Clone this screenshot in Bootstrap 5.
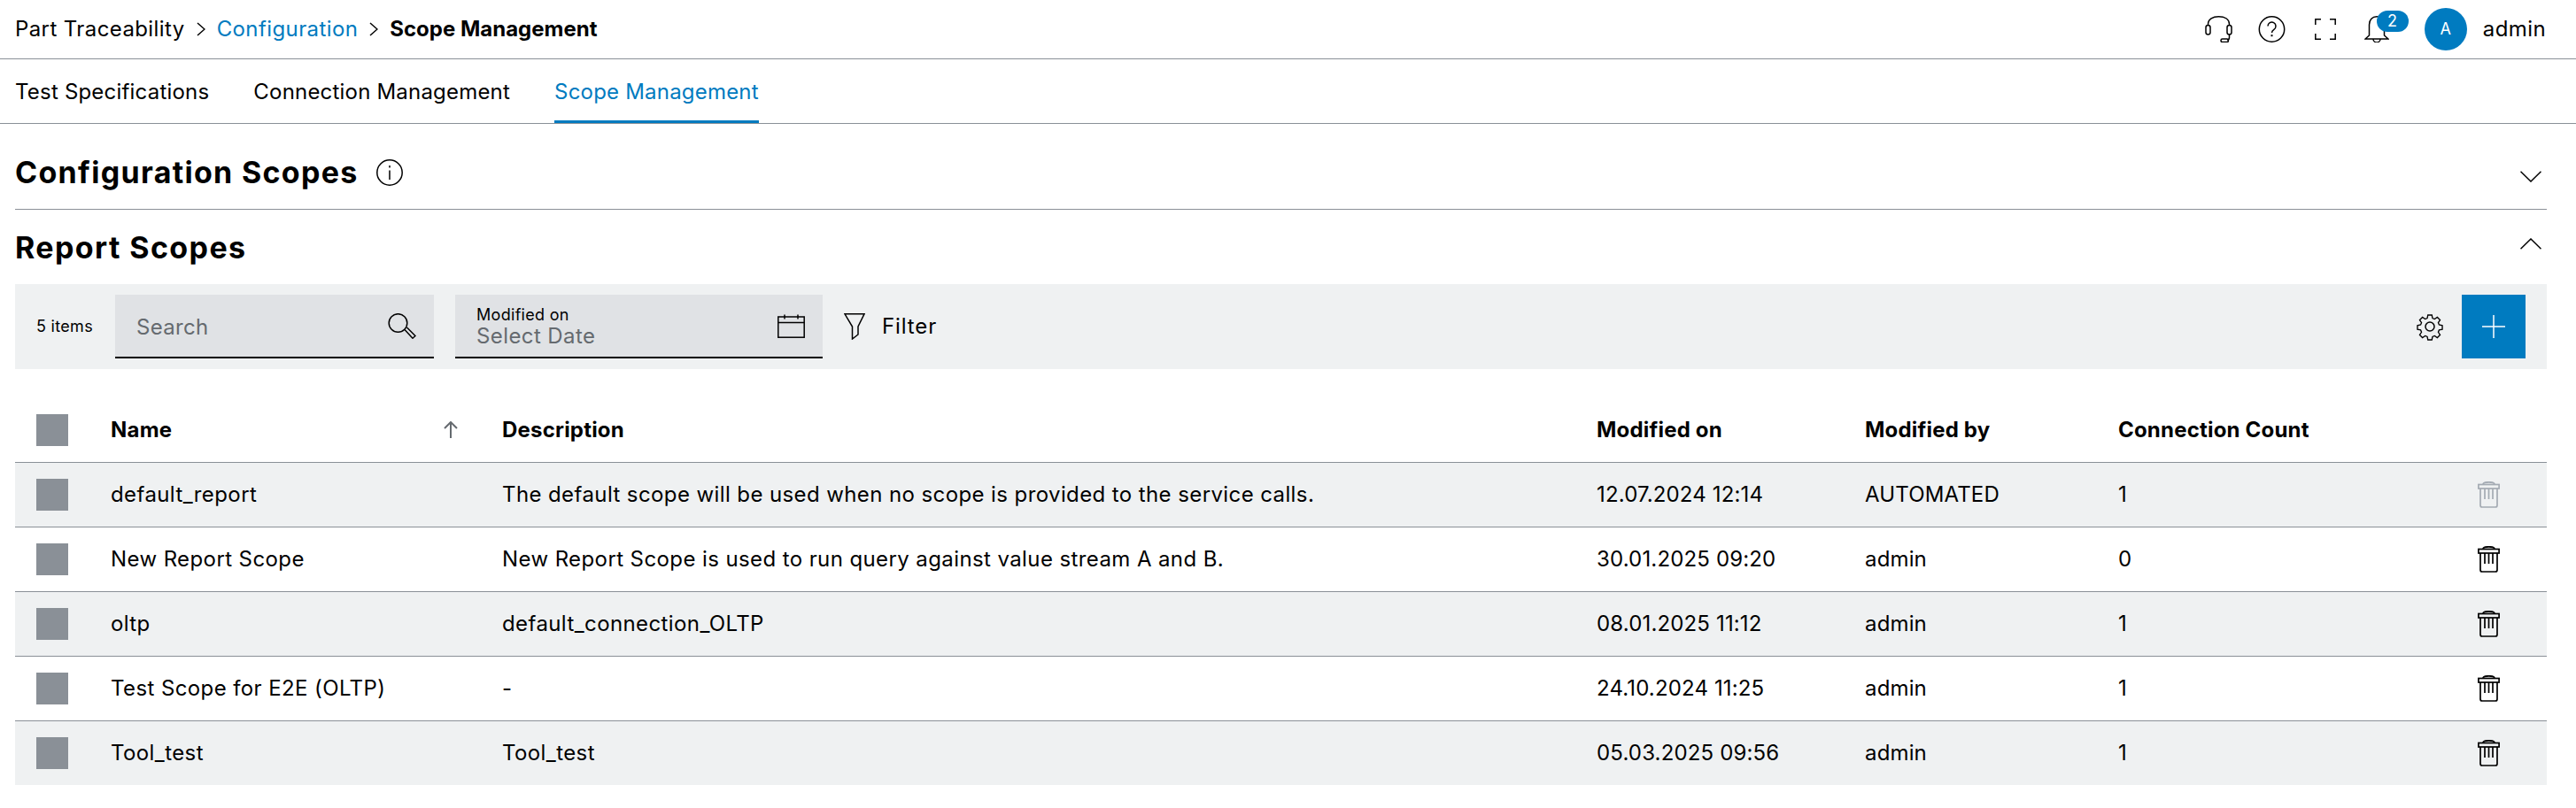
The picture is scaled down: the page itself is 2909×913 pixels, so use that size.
<!DOCTYPE html>
<html lang="en">
<head>
<meta charset="utf-8">
<title>Scope Management</title>
<link href="https://cdn.jsdelivr.net/npm/bootstrap@5.3.0/dist/css/bootstrap.min.css" rel="stylesheet">
<style>
:root { --pt-blue:#007bc0; --pt-line:#8a9097; --pt-soft:#eff1f2; --pt-field:#e0e2e5; --pt-muted:#656a6f; }
html, body { background:#fff; }
body { font-family:"Inter","Noto Sans",sans-serif; font-size:24px; line-height:32px; letter-spacing:.4px; color:#000; overflow:hidden; }
svg { display:block; flex:none; fill:none; stroke:currentColor; stroke-width:1.5; }
.top-head { height:67px; padding:0 34px 0 17px; border-bottom:1px solid var(--pt-line); }
.top-head strong { letter-spacing:0; }
.crumb-link { color:var(--pt-blue); text-decoration:none; }
.crumb-gap { margin:0 13px; }
.bell-wrap { position:relative; width:28px; height:30px; margin-left:32px; }
.bell-count { position:absolute; left:14px; top:-6px; width:36px; height:24px; border-radius:12px; background:var(--pt-blue); color:#fff; font-size:18px; line-height:24px; text-align:center; }
.user-dot { width:48px; height:48px; border-radius:50%; background:var(--pt-blue); color:#fff; font-size:18px; margin:0 18px 0 40px; }
.tab-bar { height:73px; padding:0 17px; border-bottom:1px solid var(--pt-line); gap:50px; letter-spacing:.2px; }
.tab-bar .nav-link { height:72px; padding:0; color:#000; line-height:74px; border-bottom:3px solid transparent; }
.tab-bar .nav-link.active { color:var(--pt-blue); border-bottom-color:var(--pt-blue); }
.page-body { padding:0 33px 0 17px; }
.sect-one { padding-top:30px; border-bottom:1px solid var(--pt-line); height:97px; }
.sect-two { padding-top:17px; }
.sect-two .sect-title { margin-top:2px; }
.sect-row { height:50px; }
.sect-title { font-size:34px; line-height:50px; font-weight:700; margin:0; letter-spacing:1.4px; }
.sect-one .sect-title { letter-spacing:1.3px; }
.tool-strip { height:96px; margin-top:17px; background:var(--pt-soft); padding:0 24px; }
.count-label { font-size:18px; width:89px; flex:none; letter-spacing:.3px; }
.field-box { height:72px; background:var(--pt-field); border-bottom:2px solid #000; padding:0 20px 0 24px; flex:none; }
.search-box { width:360px; margin-right:24px; }
.search-box .field-hint { padding-top:3px; letter-spacing:.3px; }
.date-box { width:415px; margin-right:24px; }
.field-hint { color:var(--pt-muted); }
.field-cap { font-size:18px; line-height:22px; letter-spacing:.3px; }
.field-val { line-height:25px; }
.filter-word { margin-left:19px; letter-spacing:.9px; }
.tile-add { width:72px; height:72px; background:var(--pt-blue); color:#fff; border:0; border-radius:0; padding:0; }
.scope-table { table-layout:fixed; width:2859px; margin:33px 0 0; --bs-table-bg:transparent; color:#000; }
.scope-table th, .scope-table td { padding:0; height:73px; vertical-align:middle; border-bottom:1px solid var(--pt-line); font-weight:400; background:transparent; box-shadow:none; }
.scope-table thead th { font-weight:700; height:72px; letter-spacing:.2px; }
.scope-table tbody td:nth-child(4), .scope-table tbody td:nth-child(5) { letter-spacing:.15px; }
.scope-table tbody tr:nth-child(odd) td { background:var(--pt-soft); }
.scope-table tbody tr:last-child td { border-bottom:0; }
.tick-box { width:36px; height:36px; background:var(--pt-line); margin-left:24px; }
.name-head { padding-right:49px !important; }
.sort-mark { color:var(--pt-muted); stroke-width:2; }
.bin-mark { margin-left:auto; margin-right:53px; stroke-width:1.7; }
.bin-off { color:#a4abb3; }
</style>
</head>
<body>
<header class="top-head d-flex align-items-center justify-content-between">
  <nav class="d-flex align-items-center" aria-label="breadcrumb">
    <span>Part Traceability</span>
    <svg class="crumb-gap" width="10" height="16" viewBox="0 0 10 16"><path d="M1 1l8 7-8 7"/></svg>
    <a class="crumb-link" href="#">Configuration</a>
    <svg class="crumb-gap" width="10" height="16" viewBox="0 0 10 16"><path d="M1 1l8 7-8 7"/></svg>
    <strong>Scope Management</strong>
  </nav>
  <div class="d-flex align-items-center">
    <svg width="31" height="30" viewBox="0 0 31 30"><path d="M3.500 10V9.500C3.500 3.500 9 .8 15.500 .8S27.500 3.500 27.500 9.500V10"/><rect x="1" y="10.500" width="5" height="10.500" rx="2.500"/><rect x="25" y="10.500" width="5" height="10.500" rx="2.500"/><path d="M27.500 21v3.500c0 1.500-1 2.500-2.500 2.500"/><rect x="18" y="26" width="8.500" height="3.500" rx="1.700"/></svg>
    <svg style="margin-left:29px" width="31" height="30" viewBox="0 0 31 30"><circle cx="15.500" cy="15" r="14.200"/><path d="M11 11.500a4.500 4.500 0 1 1 6.900 3.800c-1.600 1-2.400 1.800-2.400 3.700"/><path d="M15.500 21.200v2" stroke-width="2"/></svg>
    <svg style="margin-left:33px" width="24" height="24" viewBox="0 0 24 24"><path d="M.8 7V.8H7M17 .8h6.200V7M23.200 17v6.200H17M7 23.200H.8V17"/></svg>
    <div class="bell-wrap">
      <svg width="28" height="30" viewBox="0 0 28 30"><path d="M5.500 22V10C5.500 4 9 .8 14 .8S22.500 4 22.500 10V22L27 26H1Z"/><path d="M10 26a4 4 0 0 0 8 0"/></svg>
      <span class="bell-count">2</span>
    </div>
    <div class="user-dot d-flex align-items-center justify-content-center">A</div>
    <span>admin</span>
  </div>
</header>
<ul class="nav tab-bar">
  <li class="nav-item"><a class="nav-link" href="#">Test Specifications</a></li>
  <li class="nav-item"><a class="nav-link" href="#">Connection Management</a></li>
  <li class="nav-item"><a class="nav-link active" href="#">Scope Management</a></li>
</ul>
<main class="page-body">
  <section class="sect-one">
    <div class="sect-row d-flex align-items-center justify-content-between">
      <div class="d-flex align-items-center">
        <h2 class="sect-title">Configuration Scopes</h2>
        <svg style="margin-left:20px" width="30" height="30" viewBox="0 0 30 30"><circle cx="15" cy="15" r="14.200"/><path d="M15 12.500V23M15 7v2.500"/></svg>
      </div>
      <svg class="mt-2" style="margin-right:6px" width="24" height="13" viewBox="0 0 24 13"><path d="M.5 .7L12 12 23.500 .7"/></svg>
    </div>
  </section>
  <section class="sect-two">
    <div class="sect-row d-flex align-items-center justify-content-between">
      <h2 class="sect-title">Report Scopes</h2>
      <svg class="mb-2" style="margin-right:6px" width="24" height="13" viewBox="0 0 24 13"><path d="M.5 12.300L12 1 23.500 12.300"/></svg>
    </div>
    <div class="tool-strip d-flex align-items-center">
      <span class="count-label">5 items</span>
      <div class="field-box search-box d-flex align-items-center justify-content-between">
        <span class="field-hint">Search</span>
        <svg width="32" height="29" viewBox="0 0 32 29"><circle cx="11.500" cy="11" r="10.300"/><path d="M19 18.500L28 28.200l3-2.700-9.500-9.500"/></svg>
      </div>
      <div class="field-box date-box d-flex align-items-center justify-content-between">
        <div>
          <div class="field-cap">Modified on</div>
          <div class="field-val field-hint">Select Date</div>
        </div>
        <svg width="31" height="27" viewBox="0 0 31 27"><rect x=".8" y="3" width="29.400" height="23.200"/><path d="M.8 9.500H30.200M8 .5v5M23 .5v5"/></svg>
      </div>
      <svg width="24" height="30" viewBox="0 0 24 30"><path d="M1 .8H23L16 15V24L9.500 29V15Z"/></svg>
      <span class="filter-word">Filter</span>
      <svg class="ms-auto" width="32" height="32" viewBox="0 0 32 32"><circle cx="16" cy="16" r="5"/><path d="M13.500 1.500h5l.8 4 2.600 1.100 3.400-2.300 3.500 3.500-2.300 3.400 1.100 2.600 4 .8v5l-4 .8-1.100 2.600 2.300 3.400-3.500 3.500-3.400-2.300-2.600 1.100-.8 4h-5l-.8-4-2.600-1.100-3.400 2.300-3.500-3.500 2.300-3.400-1.100-2.600-4-.8v-5l4-.8 1.100-2.600-2.300-3.400 3.500-3.500 3.400 2.300 2.600-1.100z" transform="translate(1.600 1.600) scale(.9)"/></svg>
      <button class="btn tile-add d-flex align-items-center justify-content-center" style="margin-left:20px" type="button" aria-label="Add">
        <svg width="26" height="26" viewBox="0 0 26 26"><path d="M13 0V26M0 13H26"/></svg>
      </button>
    </div>
    <table class="table scope-table">
      <colgroup><col style="width:108px"><col style="width:442px"><col style="width:1236px"><col style="width:303px"><col style="width:286px"><col></colgroup>
      <thead>
        <tr>
          <th><div class="tick-box"></div></th>
          <th class="name-head"><div class="d-flex align-items-center justify-content-between">Name<svg class="sort-mark" width="18" height="20" viewBox="0 0 18 20"><path d="M9 19V1M2 8l7-7 7 7"/></svg></div></th>
          <th>Description</th><th>Modified on</th><th>Modified by</th><th>Connection Count</th>
        </tr>
      </thead>
      <tbody>
        <tr><td><div class="tick-box"></div></td><td>default_report</td><td>The default scope will be used when no scope is provided to the service calls.</td><td>12.07.2024 12:14</td><td>AUTOMATED</td><td><div class="d-flex align-items-center">1<svg class="bin-mark bin-off" width="25" height="30" viewBox="0 0 25 30"><path d="M6 3.500C6 1.500 8 .8 12.500 .8S19 1.500 19 3.500"/><rect x=".9" y="3.500" width="23.200" height="4.500"/><path d="M3 8V27a2 2 0 0 0 2 2H20a2 2 0 0 0 2-2V8M8 8v12M12.500 8v12M17 8v12"/></svg></div></td></tr>
        <tr><td><div class="tick-box"></div></td><td>New Report Scope</td><td>New Report Scope is used to run query against value stream A and B.</td><td>30.01.2025 09:20</td><td>admin</td><td><div class="d-flex align-items-center">0<svg class="bin-mark" width="25" height="30" viewBox="0 0 25 30"><path d="M6 3.500C6 1.500 8 .8 12.500 .8S19 1.500 19 3.500"/><rect x=".9" y="3.500" width="23.200" height="4.500"/><path d="M3 8V27a2 2 0 0 0 2 2H20a2 2 0 0 0 2-2V8M8 8v12M12.500 8v12M17 8v12"/></svg></div></td></tr>
        <tr><td><div class="tick-box"></div></td><td>oltp</td><td>default_connection_OLTP</td><td>08.01.2025 11:12</td><td>admin</td><td><div class="d-flex align-items-center">1<svg class="bin-mark" width="25" height="30" viewBox="0 0 25 30"><path d="M6 3.500C6 1.500 8 .8 12.500 .8S19 1.500 19 3.500"/><rect x=".9" y="3.500" width="23.200" height="4.500"/><path d="M3 8V27a2 2 0 0 0 2 2H20a2 2 0 0 0 2-2V8M8 8v12M12.500 8v12M17 8v12"/></svg></div></td></tr>
        <tr><td><div class="tick-box"></div></td><td>Test Scope for E2E (OLTP)</td><td>-</td><td>24.10.2024 11:25</td><td>admin</td><td><div class="d-flex align-items-center">1<svg class="bin-mark" width="25" height="30" viewBox="0 0 25 30"><path d="M6 3.500C6 1.500 8 .8 12.500 .8S19 1.500 19 3.500"/><rect x=".9" y="3.500" width="23.200" height="4.500"/><path d="M3 8V27a2 2 0 0 0 2 2H20a2 2 0 0 0 2-2V8M8 8v12M12.500 8v12M17 8v12"/></svg></div></td></tr>
        <tr><td><div class="tick-box"></div></td><td>Tool_test</td><td>Tool_test</td><td>05.03.2025 09:56</td><td>admin</td><td><div class="d-flex align-items-center">1<svg class="bin-mark" width="25" height="30" viewBox="0 0 25 30"><path d="M6 3.500C6 1.500 8 .8 12.500 .8S19 1.500 19 3.500"/><rect x=".9" y="3.500" width="23.200" height="4.500"/><path d="M3 8V27a2 2 0 0 0 2 2H20a2 2 0 0 0 2-2V8M8 8v12M12.500 8v12M17 8v12"/></svg></div></td></tr>
      </tbody>
    </table>
  </section>
</main>
<script src="https://cdn.jsdelivr.net/npm/bootstrap@5.3.0/dist/js/bootstrap.bundle.min.js"></script>
</body>
</html>
